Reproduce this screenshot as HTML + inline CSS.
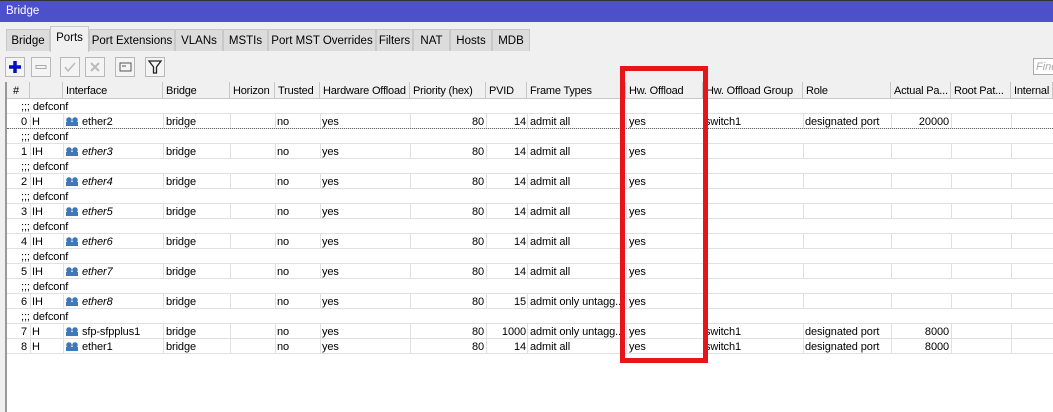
<!DOCTYPE html><html><head><style>
*{margin:0;padding:0;box-sizing:border-box}
body{width:1053px;height:412px;overflow:hidden;background:#f0f0f0;font-family:"Liberation Sans",sans-serif;font-size:11px;color:#000;position:relative}
.a{position:absolute;white-space:nowrap}
.tab{position:absolute;top:29px;height:22px;background:#dcdcdc;border:1px solid #c8c8c8;border-bottom:none;padding:5px 0 0;text-align:center;font-size:11.5px;white-space:nowrap;overflow:hidden}
.btn{position:absolute;top:57px;width:20px;height:20px;border:1px solid #b8b8b8;background:#f4f4f4}
.hd{position:absolute;top:82px;height:17px;border-right:1px solid #c8c8c8;border-bottom:1px solid #c8c8c8;padding:3px 0 0 3px;background:#f0f0f0;white-space:nowrap;overflow:hidden;letter-spacing:-0.2px}
.r{position:absolute;left:7px;width:1046px;height:15px;background:#fff;border-bottom:1px solid #e0e0e0;letter-spacing:-0.1px}
.c{position:absolute;top:2px;white-space:nowrap}
.ic{display:inline-block;width:12px;height:9px;vertical-align:-1px;margin-right:4px;background:radial-gradient(circle at 3px 3px,#3f78b8 2.5px,transparent 3px),radial-gradient(circle at 9px 3px,#3f78b8 2.5px,transparent 3px),linear-gradient(#3f78b8,#3f78b8) 0 5px/12px 4px no-repeat}
</style></head><body>
<div class="a" style="left:0;top:0;width:1053px;height:1px;background:#333"></div>
<div class="a" style="left:0;top:1px;width:1053px;height:21px;background:#4c50cb;color:#fff;padding:4px 0 0 6px;font-size:11.5px">Bridge</div>
<div class="tab" style="left:6px;width:44px">Bridge</div>
<div class="tab" style="left:50px;width:39px;top:26px;height:26px;background:#f0f0f0;padding-top:5px">Ports</div>
<div class="tab" style="left:89px;width:86px">Port Extensions</div>
<div class="tab" style="left:175px;width:48px">VLANs</div>
<div class="tab" style="left:223px;width:45px">MSTIs</div>
<div class="tab" style="left:268px;width:108px">Port MST Overrides</div>
<div class="tab" style="left:376px;width:37px">Filters</div>
<div class="tab" style="left:413px;width:37px">NAT</div>
<div class="tab" style="left:450px;width:42px">Hosts</div>
<div class="tab" style="left:492px;width:38px">MDB</div>
<div class="btn" style="left:5px"><svg width="18" height="18"><path d="M9 3v12M3 9h12" stroke="#0010c0" stroke-width="3.5"/></svg></div>
<div class="btn" style="left:31px"><svg width="18" height="18"><rect x="4" y="7.5" width="10" height="3" fill="none" stroke="#aaa"/></svg></div>
<div class="btn" style="left:60px"><svg width="18" height="18"><path d="M4 9l3 4 7-8" fill="none" stroke="#bbb" stroke-width="1.5"/></svg></div>
<div class="btn" style="left:85px"><svg width="18" height="18"><path d="M5 5l8 8M13 5l-8 8" stroke="#bbb" stroke-width="2"/></svg></div>
<div class="btn" style="left:115px"><svg width="18" height="18"><rect x="4" y="5" width="11" height="8" fill="none" stroke="#555"/><path d="M6 8h4" stroke="#555"/></svg></div>
<div class="btn" style="left:145px"><svg width="18" height="18"><path d="M3 3h12l-4.5 6v6h-3v-6z" fill="none" stroke="#222" stroke-width="1.3"/></svg></div>
<div class="a" style="left:1033px;top:58px;width:25px;height:17px;background:#fff;border:1px solid #aaa;color:#aaa;font-style:italic;padding:2px 0 0 2px">Find</div>
<div class="a" style="left:5px;top:82px;width:2px;height:330px;background:#999"></div>
<div class="a" style="left:7px;top:99px;width:1046px;height:313px;background:#fff"></div>
<div class="hd" style="left:7px;width:23px;padding-left:6px">#</div>
<div class="hd" style="left:30px;width:33px"></div>
<div class="hd" style="left:63px;width:100px">Interface</div>
<div class="hd" style="left:163px;width:67px">Bridge</div>
<div class="hd" style="left:230px;width:45px">Horizon</div>
<div class="hd" style="left:275px;width:45px">Trusted</div>
<div class="hd" style="left:320px;width:90px">Hardware Offload</div>
<div class="hd" style="left:410px;width:76px">Priority (hex)</div>
<div class="hd" style="left:486px;width:41px">PVID</div>
<div class="hd" style="left:527px;width:99px">Frame Types</div>
<div class="hd" style="left:626px;width:77px">Hw. Offload</div>
<div class="hd" style="left:703px;width:100px">Hw. Offload Group</div>
<div class="hd" style="left:803px;width:88px">Role</div>
<div class="hd" style="left:891px;width:60px">Actual Pa...</div>
<div class="hd" style="left:951px;width:60px">Root Pat...</div>
<div class="hd" style="left:1011px;width:42px">Internal</div>
<div id="rows"></div>
<script>
var d=[["0","H","ether2",0,"14","admit all","switch1","designated port","20000"],
["1","IH","ether3",1,"14","admit all"],["2","IH","ether4",1,"14","admit all"],["3","IH","ether5",1,"14","admit all"],["4","IH","ether6",1,"14","admit all"],["5","IH","ether7",1,"14","admit all"],["6","IH","ether8",1,"15","admit only untagg..."],
["7","H","sfp-sfpplus1",0,"1000","admit only untagg...","switch1","designated port","8000"],["8","H","ether1",0,"14","admit all","switch1","designated port","8000",1]];
var h="",y=99;
function vl(){var s="";[30,63,163,230,275,320,410,486,527,626,703,803,891,951,1011].forEach(function(x){s+='<div class="a" style="left:'+(x-7)+'px;top:0;width:1px;height:15px;background:#e0e0e0"></div>'});return s}
d.forEach(function(r){
if(!r[9]){h+='<div class="r" style="top:'+y+'px"><span class="c" style="left:14px">;;; defconf</span></div>';y+=15;}
h+='<div class="r" style="top:'+y+'px">'+vl()+'<span class="c" style="left:14px">'+r[0]+'</span><span class="c" style="left:25px">'+r[1]+'</span><span class="c" style="left:59px"><i class="ic"></i>'+(r[3]?'<i>'+r[2]+'</i>':r[2])+'</span><span class="c" style="left:159px">bridge</span><span class="c" style="left:270px">no</span><span class="c" style="left:315px">yes</span><span class="c" style="left:403px;width:74px;text-align:right">80</span><span class="c" style="left:479px;width:40px;text-align:right">'+r[4]+'</span><span class="c" style="left:523px">'+r[5]+'</span><span class="c" style="left:622px">yes</span>'+(r[6]?'<span class="c" style="left:698px">'+r[6]+'</span><span class="c" style="left:798px">'+r[7]+'</span><span class="c" style="left:884px;width:58px;text-align:right">'+r[8]+'</span>':'')+'</div>';y+=15;});
document.getElementById('rows').innerHTML=h;
</script>
<div class="a" style="left:7px;top:128px;width:1046px;height:1px;border-top:1px dotted #666"></div>
<div class="a" style="left:620px;top:66px;width:88px;height:297px;border:5px solid #e8141c"></div>
</body></html>
